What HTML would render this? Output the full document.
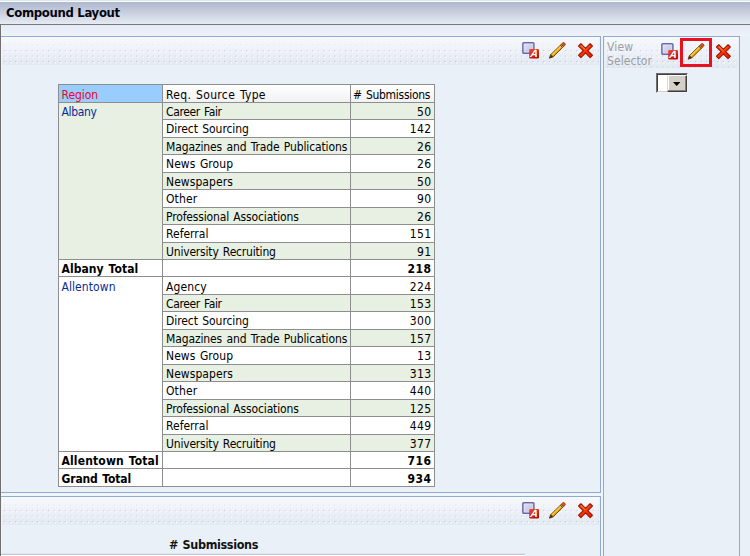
<!DOCTYPE html>
<html lang="en"><head><meta charset="utf-8"><title>Compound Layout</title>
<style>
html,body{margin:0;padding:0}
body{width:750px;height:556px;overflow:hidden;position:relative;background:#eaf0f8;font-family:"DejaVu Sans Condensed","Liberation Sans",sans-serif;font-size:12px;color:#000}
.a{position:absolute}
.t{position:absolute;white-space:nowrap;line-height:14px;height:14px}
.b{font-weight:bold}
.ln{position:absolute;background:#8fabcf}
svg{position:absolute;display:block;overflow:visible}

</style></head><body>
<svg width="0" height="0" style="left:0;top:0"><defs>
<pattern id="dots" width="11" height="11" patternUnits="userSpaceOnUse">
<rect x="2.2" y="2" width="1.1" height="1.1" fill="#8ea6d0" fill-opacity=".6"/><rect x="3.3" y="3.1" width="1.2" height="1.2" fill="#fff"/>
<rect x="7.7" y="2" width="1.1" height="1.1" fill="#8ea6d0" fill-opacity=".4"/><rect x="8.8" y="3.1" width="1.2" height="1.2" fill="#fff" fill-opacity=".9"/>
<rect x="2.2" y="7.5" width="1.1" height="1.1" fill="#8ea6d0" fill-opacity=".4"/><rect x="3.3" y="8.6" width="1.2" height="1.2" fill="#fff" fill-opacity=".9"/>
<rect x="7.7" y="7.5" width="1.1" height="1.1" fill="#8ea6d0" fill-opacity=".3"/><rect x="8.8" y="8.6" width="1.2" height="1.2" fill="#fff" fill-opacity=".7"/>
</pattern>
<linearGradient id="hg" x1="0" y1="0" x2="0" y2="1"><stop offset="0" stop-color="#f7f9fc"/><stop offset="1" stop-color="#e3e8f2"/></linearGradient>
<linearGradient id="fade" x1="0" y1="0" x2="0" y2="1"><stop offset="0" stop-color="#f7f9fc" stop-opacity="1"/><stop offset=".55" stop-color="#eef1f8" stop-opacity="0"/></linearGradient>
<linearGradient id="xg" gradientUnits="userSpaceOnUse" x1="2" y1="1" x2="12" y2="14"><stop offset="0" stop-color="#ff5a14"/><stop offset=".5" stop-color="#ff3806"/><stop offset="1" stop-color="#f01c00"/></linearGradient>
<linearGradient id="ag" x1="0" y1="0" x2=".6" y2="1"><stop offset="0" stop-color="#f04c30"/><stop offset="1" stop-color="#b80c08"/></linearGradient>
<linearGradient id="sq" x1="0" y1="0" x2="1" y2="1"><stop offset="0" stop-color="#e2e2f3"/><stop offset="1" stop-color="#bdbede"/></linearGradient>
<linearGradient id="pg" x1="0" y1="0" x2="0" y2="1"><stop offset="0" stop-color="#ffe45a"/><stop offset=".5" stop-color="#ffc010"/><stop offset="1" stop-color="#d88a06"/></linearGradient>
<g id="ic-format">
<rect x="0.9" y="0.7" width="11" height="10.6" rx=".9" fill="url(#sq)" stroke="#6769a9" stroke-width="1.5"/>
<rect x="2.1" y="1.9" width="8.6" height="8.2" rx=".4" fill="none" stroke="#fff" stroke-opacity=".35" stroke-width=".8"/>
<rect x="7.2" y="7.1" width="9.8" height="9.5" rx="1.3" fill="url(#ag)"/>
<text transform="translate(7.9,14.8) skewX(-8)" font-family="&quot;Liberation Sans&quot;,sans-serif" font-size="10.4" font-weight="bold" font-style="italic" fill="#fff">A</text>
</g>
<g id="ic-pencil"><g transform="translate(0.3,16.3) rotate(-44.5)">
<path d="M0.2 0 L3.8 -1.7 L3.8 1.7 Z" fill="#4a2a08" stroke="#5e3608" stroke-width=".9" stroke-linejoin="round"/>
<rect x="3.8" y="-1.6" width="13.2" height="3.2" fill="url(#pg)" stroke="#70430c" stroke-width=".9"/>
<rect x="17" y="-1.6" width="1.5" height="3.2" fill="#aaa69e" stroke="#70430c" stroke-width=".9"/>
<path d="M18.5 -1.6 H20.1 Q21.6 -1.6 21.6 0 Q21.6 1.6 20.1 1.6 H18.5 Z" fill="#f3500c" stroke="#8a3c08" stroke-width=".9"/>
</g></g>
<g id="ic-x">
<path d="M12.13 0.76 L14.39 3.02 L9.76 7.65 L14.39 12.28 L12.13 14.54 L7.50 9.91 L2.87 14.54 L0.61 12.28 L5.24 7.65 L0.61 3.02 L2.87 0.76 L7.50 5.39 Z" fill="url(#xg)" stroke="#9c1600" stroke-width="1.15" stroke-linejoin="round"/>
<path d="M3.2 2.6 L7 6.4" stroke="#ff8a3c" stroke-width="1.1" stroke-linecap="round" fill="none" stroke-opacity=".7"/>
<path d="M11.6 2.8 L8.6 5.8" stroke="#ff7a30" stroke-width=".9" stroke-linecap="round" fill="none" stroke-opacity=".5"/>
</g>
</defs></svg>
<div class="a" style="left:0;top:0;width:750px;height:1px;background:#e1e5ee"></div>
<div class="a" style="left:0;top:1px;width:750px;height:1px;background:#fafbfd"></div>
<div class="a" style="left:0;top:2px;width:750px;height:22px;background:linear-gradient(#aeb8ce,#c9d0df 50%,#e6eaf3)"></div>
<div class="a" style="left:0;top:24px;width:750px;height:1px;background:#787878"></div>
<div class="t b" style="left:6px;top:6px;font-size:13px;color:#050510;letter-spacing:-0.33px">Compound Layout</div>
<div class="a" style="left:1px;top:25px;width:749px;height:11px;background:linear-gradient(#e5ebf6,#eef2fa)"></div>
<div class="a" style="left:0;top:24px;width:1px;height:532px;background:#6f6f6f"></div>
<div class="a" style="left:1px;top:25px;width:1px;height:531px;background:#f1f5fb"></div>
<div class="ln" style="left:1px;top:36px;width:600px;height:1px"></div>
<div class="ln" style="left:600px;top:36px;width:1px;height:457px"></div>
<div class="ln" style="left:1px;top:492px;width:600px;height:1px"></div>
<svg width="597" height="28" style="left:2px;top:37px"><rect width="597" height="28" fill="url(#hg)"/><rect width="597" height="28" fill="url(#dots)"/><rect width="597" height="28" fill="url(#fade)"/></svg>
<svg width="80" height="20" style="left:522px;top:42px"><use href="#ic-format" x="0" y="0"/><use href="#ic-pencil" x="27" y="0"/><use href="#ic-x" x="56" y="1"/></svg>
<div class="a" style="left:1px;top:493px;width:602px;height:3px;background:#f0f4fb"></div>
<div class="a" style="left:601px;top:36px;width:2px;height:520px;background:#eef3fa"></div>
<div class="ln" style="left:1px;top:496px;width:600px;height:1px"></div>
<div class="ln" style="left:600px;top:496px;width:1px;height:60px"></div>
<svg width="597" height="28" style="left:2px;top:497px"><rect width="597" height="28" fill="url(#hg)"/><rect width="597" height="28" fill="url(#dots)"/><rect width="597" height="28" fill="url(#fade)"/></svg>
<svg width="80" height="20" style="left:522px;top:502px"><use href="#ic-format" x="0" y="0"/><use href="#ic-pencil" x="27" y="0"/><use href="#ic-x" x="56" y="1"/></svg>
<div class="t b" style="left:169px;top:538px;font-size:12.5px;color:#111;letter-spacing:-0.367px;word-spacing:1.0px"># Submissions</div>
<div class="a" style="left:1px;top:553px;width:524px;height:1px;background:#dfe4ef"></div>
<div class="a" style="left:1px;top:554px;width:524px;height:1px;background:#c2c8dc"></div>
<div class="a" style="left:1px;top:555px;width:524px;height:1px;background:#fff"></div>
<div class="ln" style="left:603px;top:36px;width:137px;height:1px"></div>
<div class="ln" style="left:603px;top:36px;width:1px;height:520px"></div>
<div class="ln" style="left:739px;top:36px;width:1px;height:520px"></div>
<svg width="133" height="31" style="left:605px;top:37px"><rect width="133" height="31" fill="url(#hg)"/><rect width="133" height="31" fill="url(#dots)"/><rect width="133" height="31" fill="url(#fade)"/></svg>
<div class="t" style="left:607px;top:40px;color:#9d9da3;letter-spacing:0.200px">View</div>
<div class="t" style="left:607px;top:54px;color:#9d9da3;letter-spacing:0.071px">Selector</div>
<svg width="80" height="20" style="left:661px;top:43.3px"><use href="#ic-format" x="0" y="0"/><use href="#ic-pencil" x="26.7" y="0"/><use href="#ic-x" x="54.9" y="1"/></svg>
<div class="a" style="left:680px;top:38px;width:26px;height:23px;border:3px solid #e8111f"></div>
<div class="a" style="left:656px;top:73px;width:32px;height:20px;background:#fff;box-sizing:border-box;border:1px solid;border-color:#6c6c6c #f4f2ec #f4f2ec #6c6c6c"></div>
<div class="a" style="left:657px;top:74px;width:30px;height:18px;box-sizing:border-box;border:1px solid;border-color:#3f3f3f #d4d0c8 #d4d0c8 #3f3f3f"></div>
<div class="a" style="left:667px;top:75px;width:20px;height:17px;background:#d4d0c8;box-sizing:border-box;border:1px solid;border-color:#fff #404040 #404040 #dedad2;box-shadow:inset -1px -1px 0 #808080,inset 1px 0 0 #fff"></div>
<svg width="8" height="4" style="left:673.3px;top:82px"><path d="M0 0 H7.4 L3.7 3.9 Z" fill="#000"/></svg>
<div class="a" style="left:58px;top:84px;width:377px;height:403px;background:#fff"></div>
<div class="a" style="left:59px;top:85px;width:103px;height:17px;background:#99ccff"></div>
<div class="a" style="left:163px;top:85px;width:271px;height:17px;background:linear-gradient(#fff,#f1f1f5)"></div>
<div class="a" style="left:163px;top:103px;width:271px;height:16px;background:#e7f0e3"></div>
<div class="a" style="left:163px;top:138px;width:271px;height:16px;background:#e7f0e3"></div>
<div class="a" style="left:163px;top:173px;width:271px;height:16px;background:#e7f0e3"></div>
<div class="a" style="left:163px;top:208px;width:271px;height:16px;background:#e7f0e3"></div>
<div class="a" style="left:163px;top:243px;width:271px;height:16px;background:#e7f0e3"></div>
<div class="a" style="left:163px;top:295px;width:271px;height:16px;background:#e7f0e3"></div>
<div class="a" style="left:163px;top:330px;width:271px;height:16px;background:#e7f0e3"></div>
<div class="a" style="left:163px;top:365px;width:271px;height:16px;background:#e7f0e3"></div>
<div class="a" style="left:163px;top:400px;width:271px;height:16px;background:#e7f0e3"></div>
<div class="a" style="left:163px;top:435px;width:271px;height:16px;background:#e7f0e3"></div>
<div class="a" style="left:59px;top:103px;width:103px;height:156px;background:#e7f0e3"></div>
<div class="a" style="left:58px;top:84px;width:377px;height:1px;background:#8e8e8e"></div>
<div class="a" style="left:58px;top:102px;width:377px;height:1px;background:#8e8e8e"></div>
<div class="a" style="left:162px;top:119px;width:273px;height:1px;background:#8e8e8e"></div>
<div class="a" style="left:162px;top:137px;width:273px;height:1px;background:#8e8e8e"></div>
<div class="a" style="left:162px;top:154px;width:273px;height:1px;background:#8e8e8e"></div>
<div class="a" style="left:162px;top:172px;width:273px;height:1px;background:#8e8e8e"></div>
<div class="a" style="left:162px;top:189px;width:273px;height:1px;background:#8e8e8e"></div>
<div class="a" style="left:162px;top:207px;width:273px;height:1px;background:#8e8e8e"></div>
<div class="a" style="left:162px;top:224px;width:273px;height:1px;background:#8e8e8e"></div>
<div class="a" style="left:162px;top:242px;width:273px;height:1px;background:#8e8e8e"></div>
<div class="a" style="left:58px;top:259px;width:377px;height:1px;background:#8e8e8e"></div>
<div class="a" style="left:58px;top:276px;width:377px;height:1px;background:#8e8e8e"></div>
<div class="a" style="left:162px;top:294px;width:273px;height:1px;background:#8e8e8e"></div>
<div class="a" style="left:162px;top:311px;width:273px;height:1px;background:#8e8e8e"></div>
<div class="a" style="left:162px;top:329px;width:273px;height:1px;background:#8e8e8e"></div>
<div class="a" style="left:162px;top:346px;width:273px;height:1px;background:#8e8e8e"></div>
<div class="a" style="left:162px;top:364px;width:273px;height:1px;background:#8e8e8e"></div>
<div class="a" style="left:162px;top:381px;width:273px;height:1px;background:#8e8e8e"></div>
<div class="a" style="left:162px;top:399px;width:273px;height:1px;background:#8e8e8e"></div>
<div class="a" style="left:162px;top:416px;width:273px;height:1px;background:#8e8e8e"></div>
<div class="a" style="left:162px;top:434px;width:273px;height:1px;background:#8e8e8e"></div>
<div class="a" style="left:58px;top:451px;width:377px;height:1px;background:#8e8e8e"></div>
<div class="a" style="left:58px;top:468px;width:377px;height:1px;background:#8e8e8e"></div>
<div class="a" style="left:58px;top:486px;width:377px;height:1px;background:#8e8e8e"></div>
<div class="a" style="left:58px;top:84px;width:1px;height:403px;background:#8e8e8e"></div>
<div class="a" style="left:162px;top:84px;width:1px;height:403px;background:#8e8e8e"></div>
<div class="a" style="left:350px;top:84px;width:1px;height:403px;background:#8e8e8e"></div>
<div class="a" style="left:434px;top:84px;width:1px;height:403px;background:#8e8e8e"></div>
<div class="t" style="left:61.5px;top:88px;color:#f0002a;letter-spacing:-0.080px">Region</div>
<div class="t" style="left:166px;top:88px;letter-spacing:0.340px;word-spacing:1.0px">Req. Source Type</div>
<div class="t" style="left:353px;top:88px;letter-spacing:-0.283px;word-spacing:1.0px"># Submissions</div>
<div class="t" style="left:61.5px;top:105px;color:#0a2a9a;letter-spacing:-0.360px">Albany</div>
<div class="t" style="left:166px;top:105px;letter-spacing:-0.370px;word-spacing:1.0px">Career Fair</div>
<div class="t" style="right:318.7px;top:105px;letter-spacing:0.3px">50</div>
<div class="t" style="left:166px;top:122px;letter-spacing:-0.064px;word-spacing:1.0px">Direct Sourcing</div>
<div class="t" style="right:318.7px;top:122px;letter-spacing:0.3px">142</div>
<div class="t" style="left:166px;top:140px;letter-spacing:-0.119px;word-spacing:1.0px">Magazines and Trade Publications</div>
<div class="t" style="right:318.7px;top:140px;letter-spacing:0.3px">26</div>
<div class="t" style="left:166px;top:157px;letter-spacing:0.067px;word-spacing:1.0px">News Group</div>
<div class="t" style="right:318.7px;top:157px;letter-spacing:0.3px">26</div>
<div class="t" style="left:166px;top:175px;letter-spacing:0.067px">Newspapers</div>
<div class="t" style="right:318.7px;top:175px;letter-spacing:0.3px">50</div>
<div class="t" style="left:166px;top:192px;letter-spacing:0.125px">Other</div>
<div class="t" style="right:318.7px;top:192px;letter-spacing:0.3px">90</div>
<div class="t" style="left:166px;top:210px;letter-spacing:-0.146px;word-spacing:1.0px">Professional Associations</div>
<div class="t" style="right:318.7px;top:210px;letter-spacing:0.3px">26</div>
<div class="t" style="left:166px;top:227px;letter-spacing:0.014px">Referral</div>
<div class="t" style="right:318.7px;top:227px;letter-spacing:0.3px">151</div>
<div class="t" style="left:166px;top:245px;letter-spacing:-0.185px;word-spacing:1.0px">University Recruiting</div>
<div class="t" style="right:318.7px;top:245px;letter-spacing:0.3px">91</div>
<div class="t b" style="left:61.5px;top:262px;color:#000;letter-spacing:0.073px;word-spacing:1.0px">Albany Total</div>
<div class="t b" style="right:318.55px;top:262px;letter-spacing:0.45px">218</div>
<div class="t" style="left:61.5px;top:280px;color:#0a2a9a;letter-spacing:0.075px">Allentown</div>
<div class="t" style="left:166px;top:280px;letter-spacing:0.100px">Agency</div>
<div class="t" style="right:318.7px;top:280px;letter-spacing:0.3px">224</div>
<div class="t" style="left:166px;top:297px;letter-spacing:-0.370px;word-spacing:1.0px">Career Fair</div>
<div class="t" style="right:318.7px;top:297px;letter-spacing:0.3px">153</div>
<div class="t" style="left:166px;top:314px;letter-spacing:-0.064px;word-spacing:1.0px">Direct Sourcing</div>
<div class="t" style="right:318.7px;top:314px;letter-spacing:0.3px">300</div>
<div class="t" style="left:166px;top:332px;letter-spacing:-0.119px;word-spacing:1.0px">Magazines and Trade Publications</div>
<div class="t" style="right:318.7px;top:332px;letter-spacing:0.3px">157</div>
<div class="t" style="left:166px;top:349px;letter-spacing:0.067px;word-spacing:1.0px">News Group</div>
<div class="t" style="right:318.7px;top:349px;letter-spacing:0.3px">13</div>
<div class="t" style="left:166px;top:367px;letter-spacing:0.067px">Newspapers</div>
<div class="t" style="right:318.7px;top:367px;letter-spacing:0.3px">313</div>
<div class="t" style="left:166px;top:384px;letter-spacing:0.125px">Other</div>
<div class="t" style="right:318.7px;top:384px;letter-spacing:0.3px">440</div>
<div class="t" style="left:166px;top:402px;letter-spacing:-0.146px;word-spacing:1.0px">Professional Associations</div>
<div class="t" style="right:318.7px;top:402px;letter-spacing:0.3px">125</div>
<div class="t" style="left:166px;top:419px;letter-spacing:0.014px">Referral</div>
<div class="t" style="right:318.7px;top:419px;letter-spacing:0.3px">449</div>
<div class="t" style="left:166px;top:437px;letter-spacing:-0.185px;word-spacing:1.0px">University Recruiting</div>
<div class="t" style="right:318.7px;top:437px;letter-spacing:0.3px">377</div>
<div class="t b" style="left:61.5px;top:454px;color:#000;letter-spacing:0.150px;word-spacing:1.0px">Allentown Total</div>
<div class="t b" style="right:318.55px;top:454px;letter-spacing:0.45px">716</div>
<div class="t b" style="left:61.5px;top:472px;color:#000;letter-spacing:-0.140px;word-spacing:1.0px">Grand Total</div>
<div class="t b" style="right:318.55px;top:472px;letter-spacing:0.45px">934</div>
</body></html>
